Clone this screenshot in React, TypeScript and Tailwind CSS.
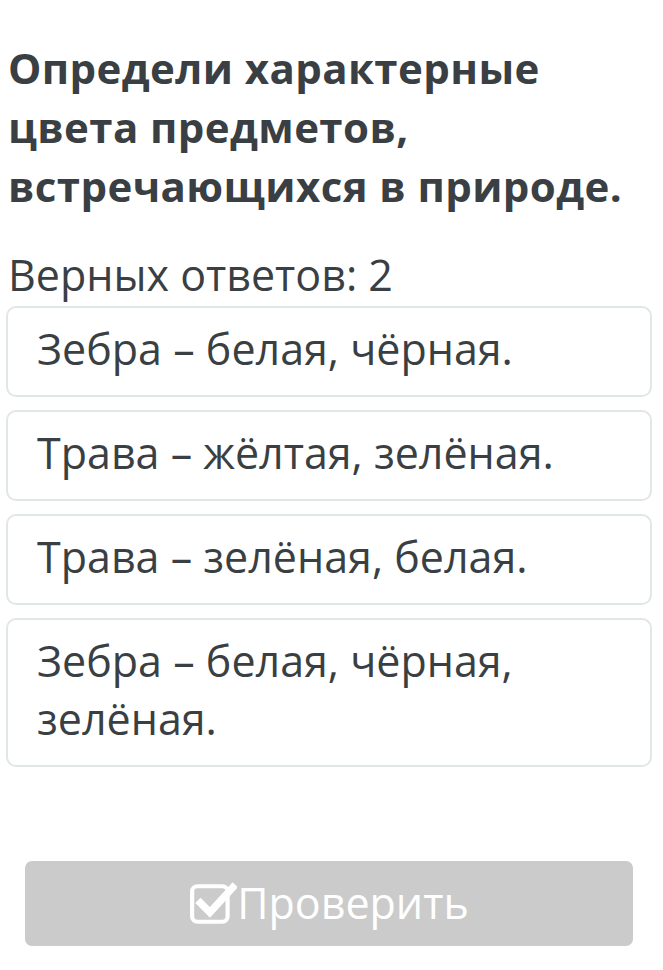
import React from 'react';

const answers = [
  'Зебра – белая, чёрная.',
  'Трава – жёлтая, зелёная.',
  'Трава – зелёная, белая.',
  'Зебра – белая, чёрная, зелёная.',
];

const CheckIcon = () => (
  <svg width="48" height="46" viewBox="0 0 46 44" fill="none">
    <rect x="3" y="5" width="34" height="34" rx="5" stroke="white" strokeWidth="4" />
    <path d="M11 21 L20 30 L42 6" stroke="white" strokeWidth="7" strokeLinecap="square" />
  </svg>
);

export default function App() {
  return (
    <div className="w-[663px] h-[970px] bg-white text-[#3a3f44] overflow-hidden" style={{ fontFamily: '"Open Sans", sans-serif' }}>
      <div className="pl-[6px] pr-[11px] pt-[38px]">
        <h1 className="pl-[2px] text-[42px] leading-[59px] font-bold tracking-[0.4px]">
          Определи характерные<br />цвета предметов,<br />встречающихся в природе.
        </h1>
        <p className="pl-[2px] mt-[35px] text-[43px] leading-[50px]">Верных ответов: 2</p>
        <div className="flex flex-col gap-[13px] mt-[6px]">
          {answers.map((a, i) => (
            <div key={i} className="border-2 border-[#e1e6e8] rounded-[10px] pl-[29px] pr-[20px] pt-[12px] pb-[17px] text-[43px] leading-[58px]">
              {a}
            </div>
          ))}
        </div>
      </div>
      <div className="pl-[25px] pr-[30px] mt-[94px]">
        <button className="w-full h-[85px] bg-[#cbcbcb] rounded-[7px] flex items-center justify-center text-white text-[43px]">
          <CheckIcon />
          <span>Проверить</span>
        </button>
      </div>
    </div>
  );
}
